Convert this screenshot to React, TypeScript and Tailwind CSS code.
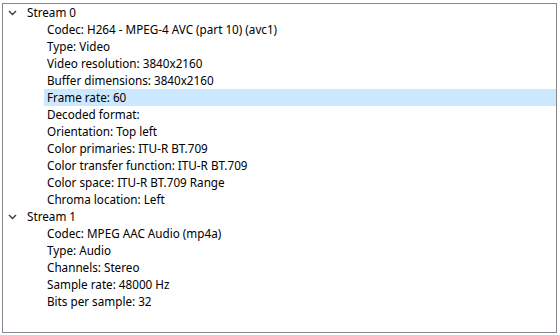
import { ReactNode } from 'react'

type Stream = { name: string; props: string[] }

const streams: Stream[] = [
  {
    name: 'Stream 0',
    props: [
      'Codec: H264 - MPEG-4 AVC (part 10) (avc1)',
      'Type: Video',
      'Video resolution: 3840x2160',
      'Buffer dimensions: 3840x2160',
      'Frame rate: 60',
      'Decoded format:',
      'Orientation: Top left',
      'Color primaries: ITU-R BT.709',
      'Color transfer function: ITU-R BT.709',
      'Color space: ITU-R BT.709 Range',
      'Chroma location: Left',
    ],
  },
  {
    name: 'Stream 1',
    props: [
      'Codec: MPEG AAC Audio (mp4a)',
      'Type: Audio',
      'Channels: Stereo',
      'Sample rate: 48000 Hz',
      'Bits per sample: 32',
    ],
  },
]

function Chevron() {
  return (
    <svg width="9" height="6" viewBox="0 0 9 6" className="shrink-0">
      <path d="M1 1 L4.5 4.5 L8 1" fill="none" stroke="#3c3c3c" strokeWidth="1.4" />
    </svg>
  )
}

function Row({ children, selected, indent }: { children: ReactNode; selected?: boolean; indent: 'stream' | 'prop' }) {
  return (
    <div
      className={
        'h-[17px] flex items-center ' +
        (indent === 'stream' ? 'pl-[5px]' : 'ml-[41px] pl-[3px] ') +
        (selected ? ' bg-[#cce8ff]' : '')
      }
    >
      {children}
    </div>
  )
}

export default function App() {
  return (
    <div className="w-[560px] h-[335px] bg-white pt-[3px] pl-[2px] pr-[3px] pb-[2px]">
      <div
        className="h-full border border-[#828790] bg-white text-[11.7px] text-black leading-none"
        style={{ fontFamily: '"Noto Sans", "Liberation Sans", sans-serif' }}
      >
        {streams.map(s => (
          <div key={s.name}>
            <Row indent="stream">
              <Chevron />
              <span className="ml-[10px]">{s.name}</span>
            </Row>
            {s.props.map(p => (
              <Row key={p} indent="prop" selected={p === 'Frame rate: 60'}>
                {p}
              </Row>
            ))}
          </div>
        ))}
      </div>
    </div>
  )
}
